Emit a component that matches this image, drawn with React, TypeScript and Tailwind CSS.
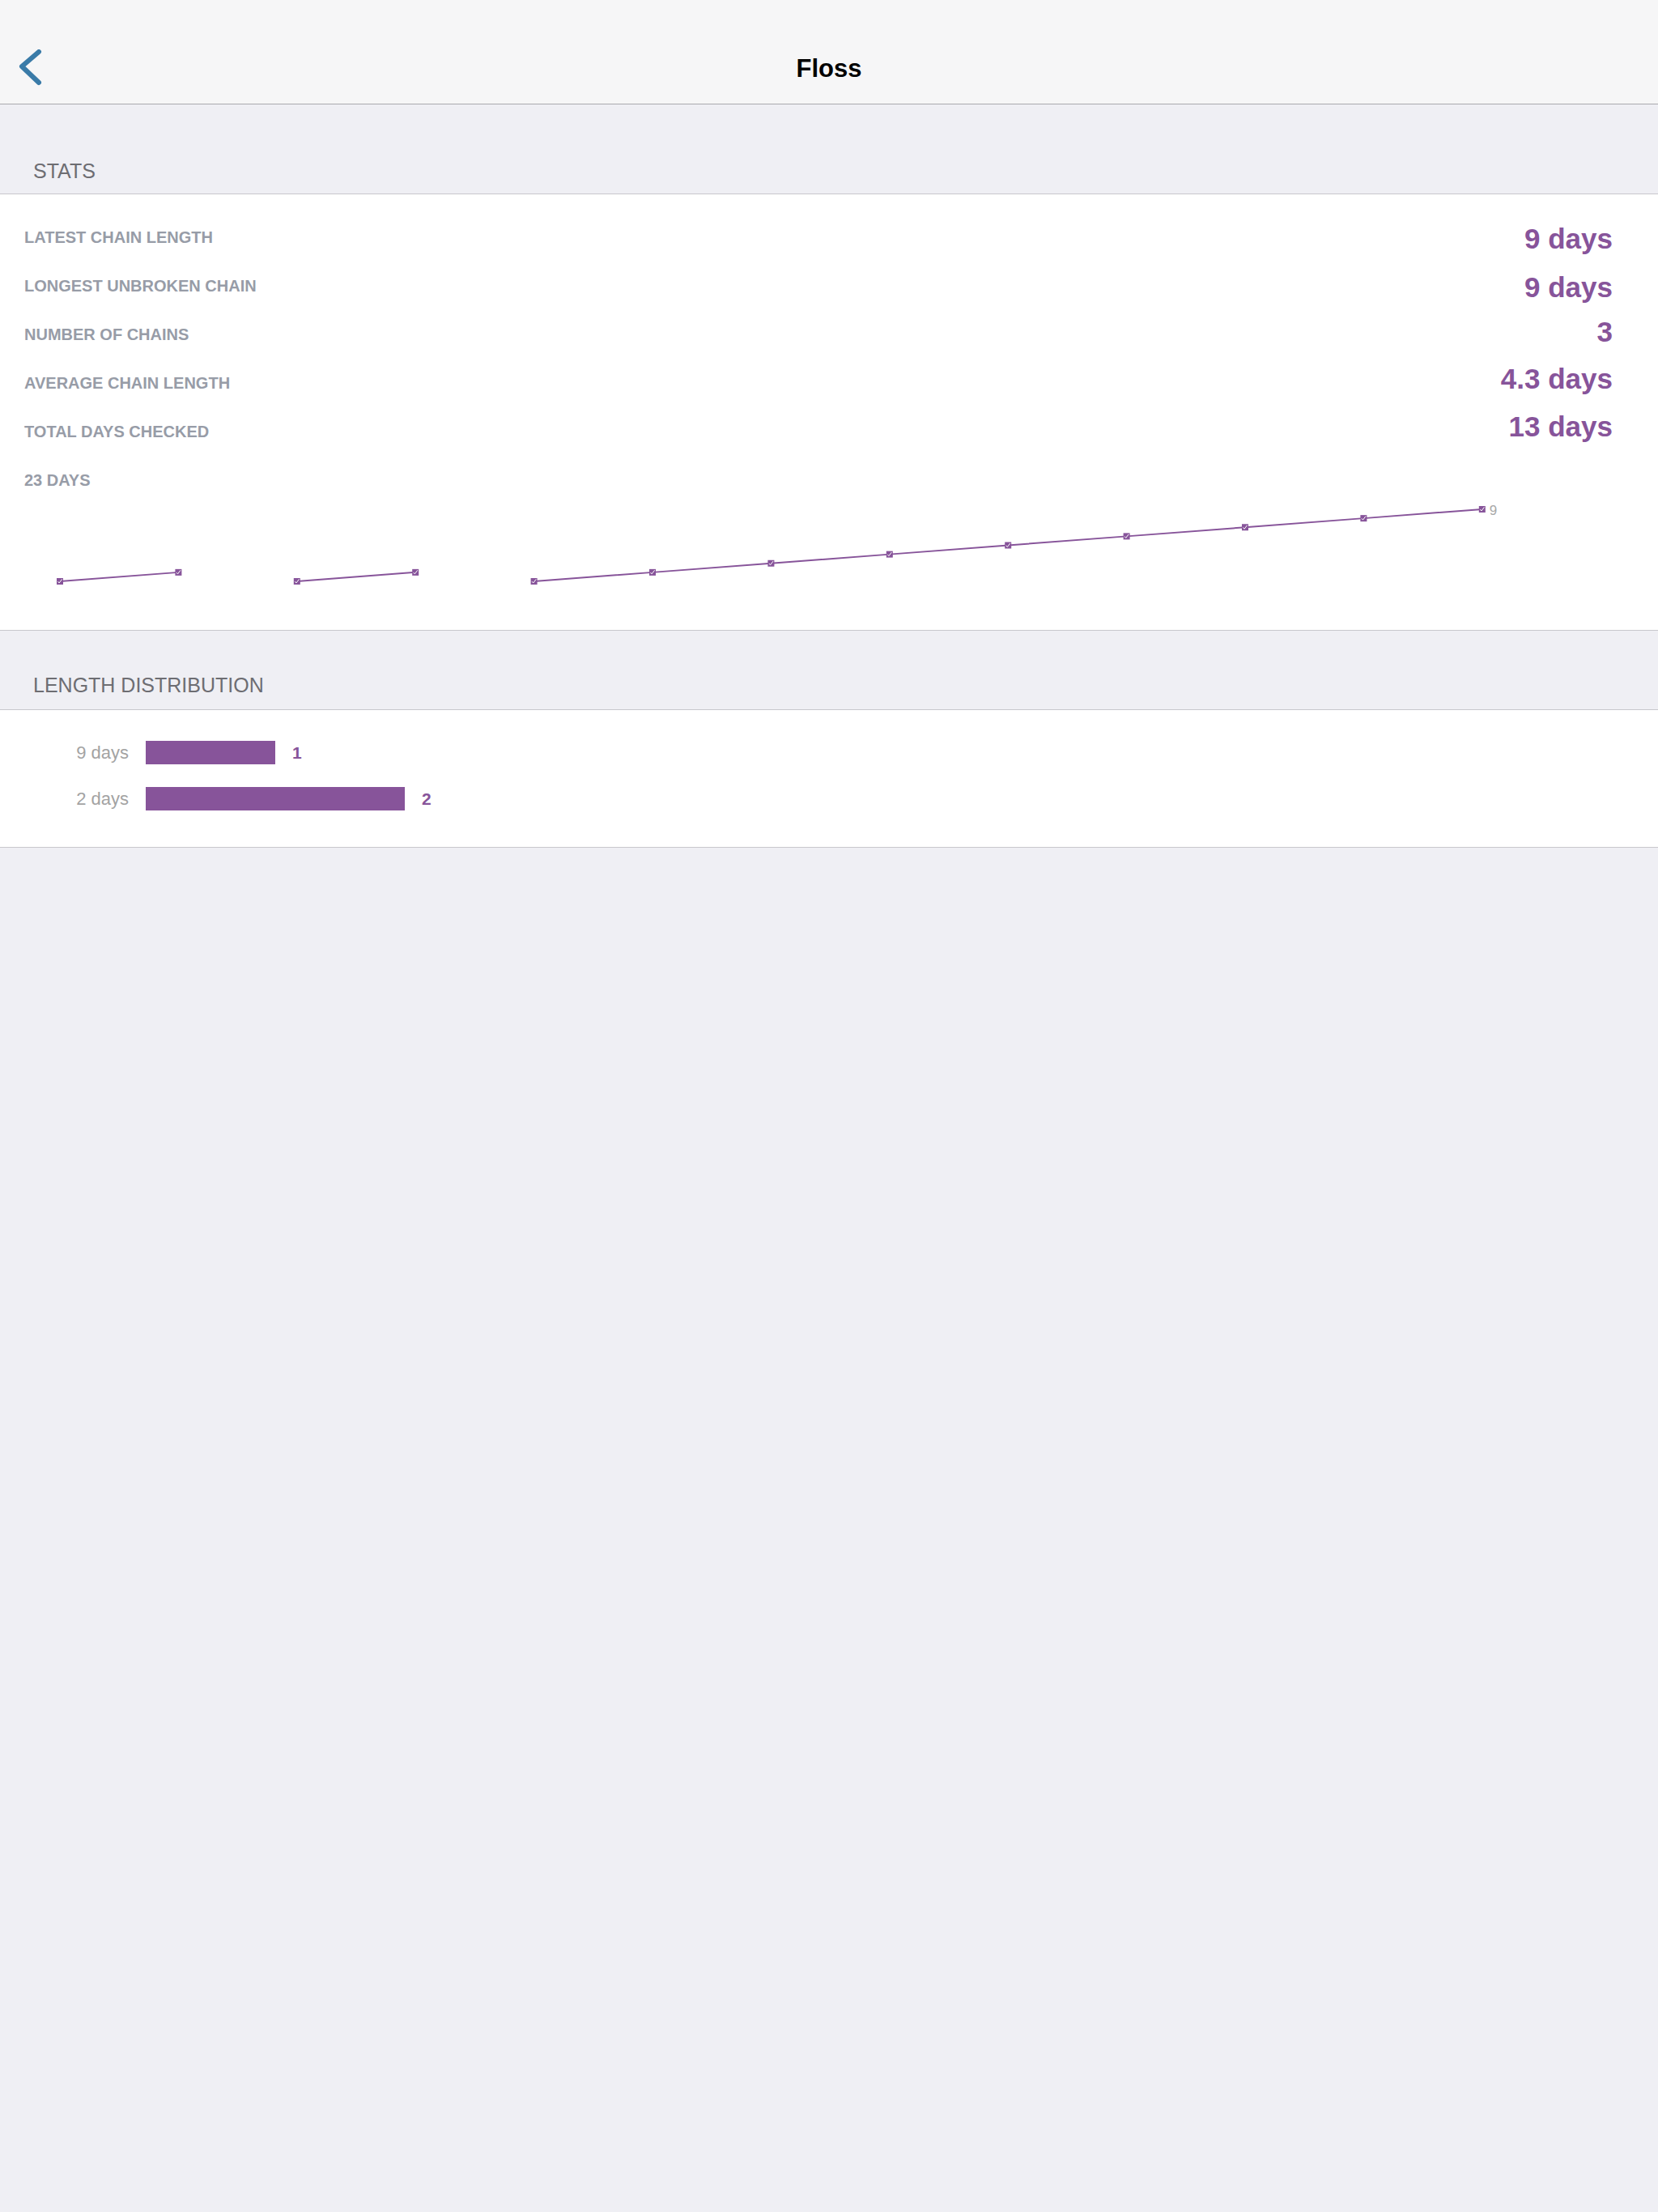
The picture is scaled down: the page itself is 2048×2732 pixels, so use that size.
import React from "react";

const PURPLE = "#87549a";
const FONT = { fontFamily: '"Liberation Sans", Arial, Helvetica, sans-serif' };

const stats: { label: string; value: string; shift: string }[] = [
  { label: "LATEST CHAIN LENGTH", value: "9 days", shift: "translate-y-[1px]" },
  { label: "LONGEST UNBROKEN CHAIN", value: "9 days", shift: "translate-y-[1px]" },
  { label: "NUMBER OF CHAINS", value: "3", shift: "-translate-y-[4px]" },
  { label: "AVERAGE CHAIN LENGTH", value: "4.3 days", shift: "-translate-y-[6px]" },
  { label: "TOTAL DAYS CHECKED", value: "13 days", shift: "-translate-y-[7px]" },
];

const chains = [
  [1, 2],
  [1, 2],
  [1, 2, 3, 4, 5, 6, 7, 8, 9],
];

function Chart() {
  const pts: { x: number; y: number; chain: number }[] = [];
  let i = 0;
  chains.forEach((c, ci) => {
    c.forEach((v) => {
      pts.push({ x: 74 + i * 146.4, y: 95 - (v - 1) * 11.125, chain: ci });
      i++;
    });
  });
  const last = pts[pts.length - 1];
  return (
    <svg
      width="2048"
      height="155"
      viewBox="0 0 2048 155"
      className="block overflow-visible"
    >
      {chains.map((_, ci) => {
        const cp = pts.filter((p) => p.chain === ci);
        return (
          <polyline
            key={ci}
            points={cp.map((p) => `${p.x},${p.y}`).join(" ")}
            fill="none"
            stroke={PURPLE}
            strokeWidth={2}
          />
        );
      })}
      {pts.map((p, k) => (
        <g key={k}>
          <rect x={p.x - 4} y={p.y - 4} width={8} height={8} fill={PURPLE} />
          <path
            d={`M ${p.x - 2.5} ${p.y + 0.2} L ${p.x - 0.9} ${p.y + 2} L ${p.x + 2.6} ${p.y - 2.6}`}
            fill="none"
            stroke="#ffffff"
            strokeWidth={1}
          />
        </g>
      ))}
      <text
        x={last.x + 9}
        y={last.y + 7}
        fontSize={17}
        fill="#a8a8a8"
        style={FONT}
      >
        9
      </text>
    </svg>
  );
}

export default function App() {
  return (
    <div className="min-h-[2732px] w-full bg-[#efeff4]" style={FONT}>
      {/* Nav bar */}
      <div className="h-[129px] bg-[#f6f6f7] border-b border-[#a9a9ad] pt-[40px]">
        <div className="h-[88px] grid grid-cols-[1fr_auto_1fr] items-center">
          <div className="pl-[23px] flex items-center">
            <svg width="32" height="46" viewBox="0 0 32 46">
              <path
                d="M 25 3 L 4 21 L 25 41"
                fill="none"
                stroke="#3a7ba8"
                strokeWidth={6}
                strokeLinecap="round"
                strokeLinejoin="round"
              />
            </svg>
          </div>
          <div className="text-[31px] font-bold text-black leading-none">Floss</div>
          <div />
        </div>
      </div>

      {/* STATS header */}
      <div className="h-[111px] flex items-end pl-[41px] pb-[15px] border-b border-[#c8c7cc]">
        <span className="text-[25px] leading-none text-[#6d6d72]">STATS</span>
      </div>

      {/* Stats card */}
      <div className="bg-white border-b border-[#c8c7cc] pt-[23px]">
        {stats.map((s) => (
          <div
            key={s.label}
            className="h-[60px] flex items-center justify-between pl-[30px] pr-[56px]"
          >
            <span className="text-[20px] font-bold leading-none text-[#979ca7]">
              {s.label}
            </span>
            <span
              className={`text-[35px] font-bold leading-none text-[#87549a] ${s.shift}`}
            >
              {s.value}
            </span>
          </div>
        ))}
        <div className="h-[60px] flex items-center pl-[30px]">
          <span className="text-[20px] font-bold leading-none text-[#979ca7]">23 DAYS</span>
        </div>
        <Chart />
      </div>

      {/* LENGTH DISTRIBUTION header */}
      <div className="h-[98px] flex items-end pl-[41px] pb-[17px] border-b border-[#c8c7cc]">
        <span className="text-[25px] leading-none text-[#6d6d72]">LENGTH DISTRIBUTION</span>
      </div>

      {/* Distribution card */}
      <div className="bg-white border-b border-[#c8c7cc] pt-[24px] pb-[31px]">
        {[
          { label: "9 days", count: 1 },
          { label: "2 days", count: 2 },
        ].map((r) => (
          <div key={r.label} className="h-[57px] flex items-center">
            <span className="w-[159px] text-right text-[22px] leading-none text-[#a3a3a3]">
              {r.label}
            </span>
            <div
              className="ml-[21px] h-[29px] bg-[#87549a]"
              style={{ width: r.count * 160 }}
            />
            <span className="ml-[21px] text-[21px] font-bold leading-none text-[#87549a]">
              {r.count}
            </span>
          </div>
        ))}
      </div>
    </div>
  );
}
